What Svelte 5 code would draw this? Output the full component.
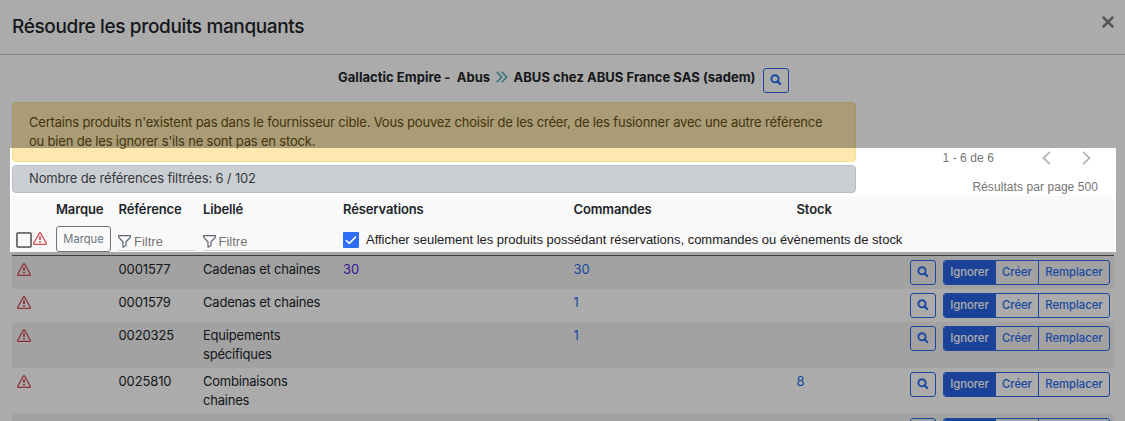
<script>
  const rows = [
    { ref: '0001577', label: 'Cadenas et chaines', res: '30', cmd: '30', stock: '', h: 33 },
    { ref: '0001579', label: 'Cadenas et chaines', res: '', cmd: '1', stock: '', h: 33 },
    { ref: '0020325', label: 'Equipements spécifiques', res: '', cmd: '1', stock: '', h: 46 },
    { ref: '0025810', label: 'Combinaisons chaines', res: '', cmd: '', stock: '8', h: 46 },
    { ref: '', label: '', res: '', cmd: '', stock: '', h: 33 }
  ];
</script>

{#snippet search()}
  <button class="search" aria-label="Rechercher">
    <svg width="12" height="12" viewBox="0 0 12 12" fill="none" stroke="currentColor">
      <circle cx="5" cy="4.8" r="3.6" stroke-width="1.9" />
      <path d="M7.6 7.4 10.2 10" stroke-width="2.2" stroke-linecap="round" />
    </svg>
  </button>
{/snippet}

{#snippet warning()}
  <svg class="warning" width="14" height="13" viewBox="0 0 14 13" fill="none" stroke="currentColor">
    <path d="M6.4 1.1Q7 .2 7.6 1.1L13.3 11.3Q13.6 12.4 12.6 12.4H1.4Q.4 12.4 .7 11.3Z" stroke-width="1.25" />
    <path d="M7 4.2V8.1M7 9.1V10.7" stroke-width="1.7" />
  </svg>
{/snippet}

{#snippet filter()}
  <div class="filter">
    <svg width="13" height="13" viewBox="0 0 13 13" fill="none" stroke="#5d6670" stroke-width="1.2" stroke-linejoin="round">
      <path d="M.6 .7H12.4V2.2L8 7V10.6L5 12.3V7L.6 2.2Z" />
    </svg>
    <span>Filtre</span>
  </div>
{/snippet}

<div class="modal">
  <header>
    <h1>Résoudre les produits manquants</h1>
    <button class="close" aria-label="Fermer">
      <svg width="12" height="12" viewBox="0 0 12 12" stroke="#808080" stroke-width="2.5" stroke-linecap="round"><path d="M1.5 1.5 10.5 10.5M10.5 1.5 1.5 10.5" /></svg>
    </button>
  </header>

  <div class="route">
    <span class="from">Gallactic Empire -&nbsp; Abus</span>
    <svg width="12" height="12" viewBox="0 0 12 12" fill="none" stroke="#53a3bb" stroke-width="1.6"><path d="M.7 .8 5.7 6 .7 11.2M5.7 .8 10.7 6 5.7 11.2" /></svg>
    <span class="to">ABUS chez ABUS France SAS (sadem)</span>
    {@render search()}
  </div>

  <div class="summary">
    <div class="notices">
      <div class="alert warn">Certains produits n'existent pas dans le fournisseur cible. Vous pouvez choisir de les créer, de les fusionner avec une autre référence<br />ou bien de les ignorer s'ils ne sont pas en stock.</div>
      <div class="alert info">Nombre de références filtrées: 6 / 102</div>
    </div>
    <div class="pager">
      <div class="pages">
        <span>1 - 6 de 6</span>
        <svg width="9" height="14" viewBox="0 0 9 14" fill="none" stroke="#b9b9b9" stroke-width="2"><path d="M7.8 .9 1.6 7 7.8 13.1" /></svg>
        <svg width="9" height="14" viewBox="0 0 9 14" fill="none" stroke="#b9b9b9" stroke-width="2"><path d="M1.2 .9 7.4 7 1.2 13.1" /></svg>
      </div>
      <div class="per-page">Résultats par page 500</div>
    </div>
  </div>

  <div class="table">
    <div class="head">
      <div class="grid titles">
        <span></span><span>Marque</span><span>Référence</span><span>Libellé</span><span>Réservations</span><span>Commandes</span><span>Stock</span>
      </div>
      <div class="grid filters">
        <div class="select"><i class="box"></i>{@render warning()}</div>
        <div><button class="brand">Marque</button></div>
        {@render filter()}
        {@render filter()}
        <div class="only">
          <i class="checked"><svg width="16" height="16" viewBox="0 0 16 16" fill="none" stroke="#fff" stroke-width="1.5"><path d="M3 8.2 6.3 11.4 13 4.6" /></svg></i>
          <span>Afficher seulement les produits possédant réservations, commandes ou évènements de stock</span>
        </div>
      </div>
    </div>
    {#each rows as row}
      <div class="grid row" style:height="{row.h}px">
        <div class="icon">{#if row.ref}{@render warning()}{/if}</div>
        <span></span>
        <span>{row.ref}</span>
        <span class="label">{row.label}</span>
        <span class="visited">{row.res}</span>
        <span class="link">{row.cmd}</span>
        <span class="link">{row.stock}</span>
        <div class="actions">
          {@render search()}
          <div class="group">
            <button class="active">{row.ref ? 'Ignorer' : ''}</button><button>{row.ref ? 'Créer' : ''}</button><button>{row.ref ? 'Remplacer' : ''}</button>
          </div>
        </div>
      </div>
    {/each}
  </div>
  <div class="spotlight"></div>
</div>

<style>
  :global(body) { background: #fff; }
  .modal {
    position: relative;
    box-sizing: border-box;
    width: 1125px;
    height: 421px;
    overflow: hidden;
    background: #fff;
    color: #212529;
    font: 13px/19px Inter, sans-serif;
  }
  .modal * { box-sizing: border-box; }
  button {
    display: flex;
    align-items: center;
    justify-content: center;
    margin: 0;
    padding: 0;
    background: none;
    border: 0;
    color: inherit;
    font: inherit;
    letter-spacing: inherit;
  }
  svg { display: block; flex: none; }
  header {
    display: flex;
    justify-content: space-between;
    height: 55px;
    padding: 13px 11px 0 12px;
    border-bottom: 1px solid #c8c8c8;
  }
  h1 { margin: 0; font-size: 19px; line-height: 27px; font-weight: 500; letter-spacing: -.36px; }
  .close { width: 12px; height: 12px; margin-top: 3px; }
  .route {
    display: flex;
    height: 47px;
    padding: 13px 0 0 338px;
    font-weight: 700;
    letter-spacing: .03px;
    white-space: nowrap;
  }
  .from { width: 158px; }
  .route > svg { margin: 3px 0 0; }
  .to { width: 249.5px; margin-left: 5.5px; }
  .search {
    flex: none;
    width: 26px;
    height: 25px;
    padding: 0 1px 1px 0;
    border: 1px solid #2b6bf0;
    border-radius: 3px;
    color: #2b6bf0;
  }
  .summary { display: flex; height: 94px; padding-left: 12px; }
  .notices { display: flex; flex-direction: column; gap: 3px; width: 844px; }
  .alert { border: 1px solid; border-radius: 4px; padding: 0 16px; white-space: nowrap; letter-spacing: -.187px; }
  .warn { height: 60px; padding-top: 10px; background: #fde9b0; border-color: #fbdf93; color: #665015; }
  .info { height: 28px; padding-top: 3px; background: #cbcfd3; border-color: #b9bec3; color: #35393e; letter-spacing: -.16px; }
  .pager { flex: 1; padding-top: 47px; color: #757575; font: 12px/18px "Liberation Sans", sans-serif; letter-spacing: .07px; }
  .pages { display: flex; align-items: center; height: 18px; padding-left: 86.5px; }
  .pages span { width: 99.5px; }
  .pages svg + svg { margin-left: 31px; }
  .per-page { padding: 11px 27px 0 0; text-align: right; }
  .table { width: 1102px; margin-left: 12px; }
  .grid { display: grid; grid-template-columns: 44px 62.5px 84.5px 140px 230.5px 223px 113.5px 204px; }
  .head { height: 60px; background: #f9f9f9; border-bottom: 1px solid #5a5c5e; }
  .titles { height: 30px; padding-top: 4px; font-weight: 600; letter-spacing: -.13px; }
  .select { display: flex; padding: 6px 0 0 4px; }
  .select .warning { margin: 0 0 0 1px; }
  .box { width: 16px; height: 16px; border: 2px solid #757575; border-radius: 2px; }
  .warning { color: #d14a52; }
  .brand { width: 55px; height: 26px; border: 1px solid #6c757d; border-radius: 3px; color: #6c757d; font-size: 11.2px; }
  .filter { display: flex; align-items: flex-start; width: 77px; height: 25px; margin-left: -.5px; padding-top: 9px; border-bottom: 1px solid #d5d5d5; color: #757575; font: 13px/14px "Liberation Sans", sans-serif; }
  .filter span { margin-left: 3px; }
  .only { display: flex; grid-column: 5 / -1; padding-top: 6px; color: #212121; font: 13px/16px "Liberation Sans", sans-serif; letter-spacing: -.02px; white-space: nowrap; }
  .checked { width: 16px; height: 16px; margin-right: 7px; background: #2f6ff5; border-radius: 1px; }
  .row { padding-top: 4px; align-items: start; letter-spacing: -.12px; }
  .row:nth-child(even) { background: #f2f2f2; }
  .icon { padding: 3px 0 0 5px; }
  .label { max-width: 126px; letter-spacing: -.21px; }
  .link { color: #2b6bf0; letter-spacing: 0; }
  .visited { color: #5523d9; letter-spacing: 0; }
  .actions { display: flex; gap: 7px; letter-spacing: 0; }
  .group { display: flex; width: 167px; height: 25px; border: 1px solid #2b6bf0; border-radius: 3px; color: #2b6bf0; font-size: 11.3px; font-weight: 500; letter-spacing: -.03px; overflow: hidden; }
  .group button { flex: none; width: 71px; padding-bottom: 1px; border-left: 1px solid #2b6bf0; }
  .group button:nth-child(2) { width: 43px; }
  .group .active { width: 51px; border: 0; background: #2963e5; color: #fff; }
  /* Dimmed backdrop with the highlighted region left clear */
  .spotlight { position: absolute; left: 10px; top: 148px; width: 1106px; height: 104px; box-shadow: 0 0 0 1200px rgba(0, 0, 0, .33); }
</style>
